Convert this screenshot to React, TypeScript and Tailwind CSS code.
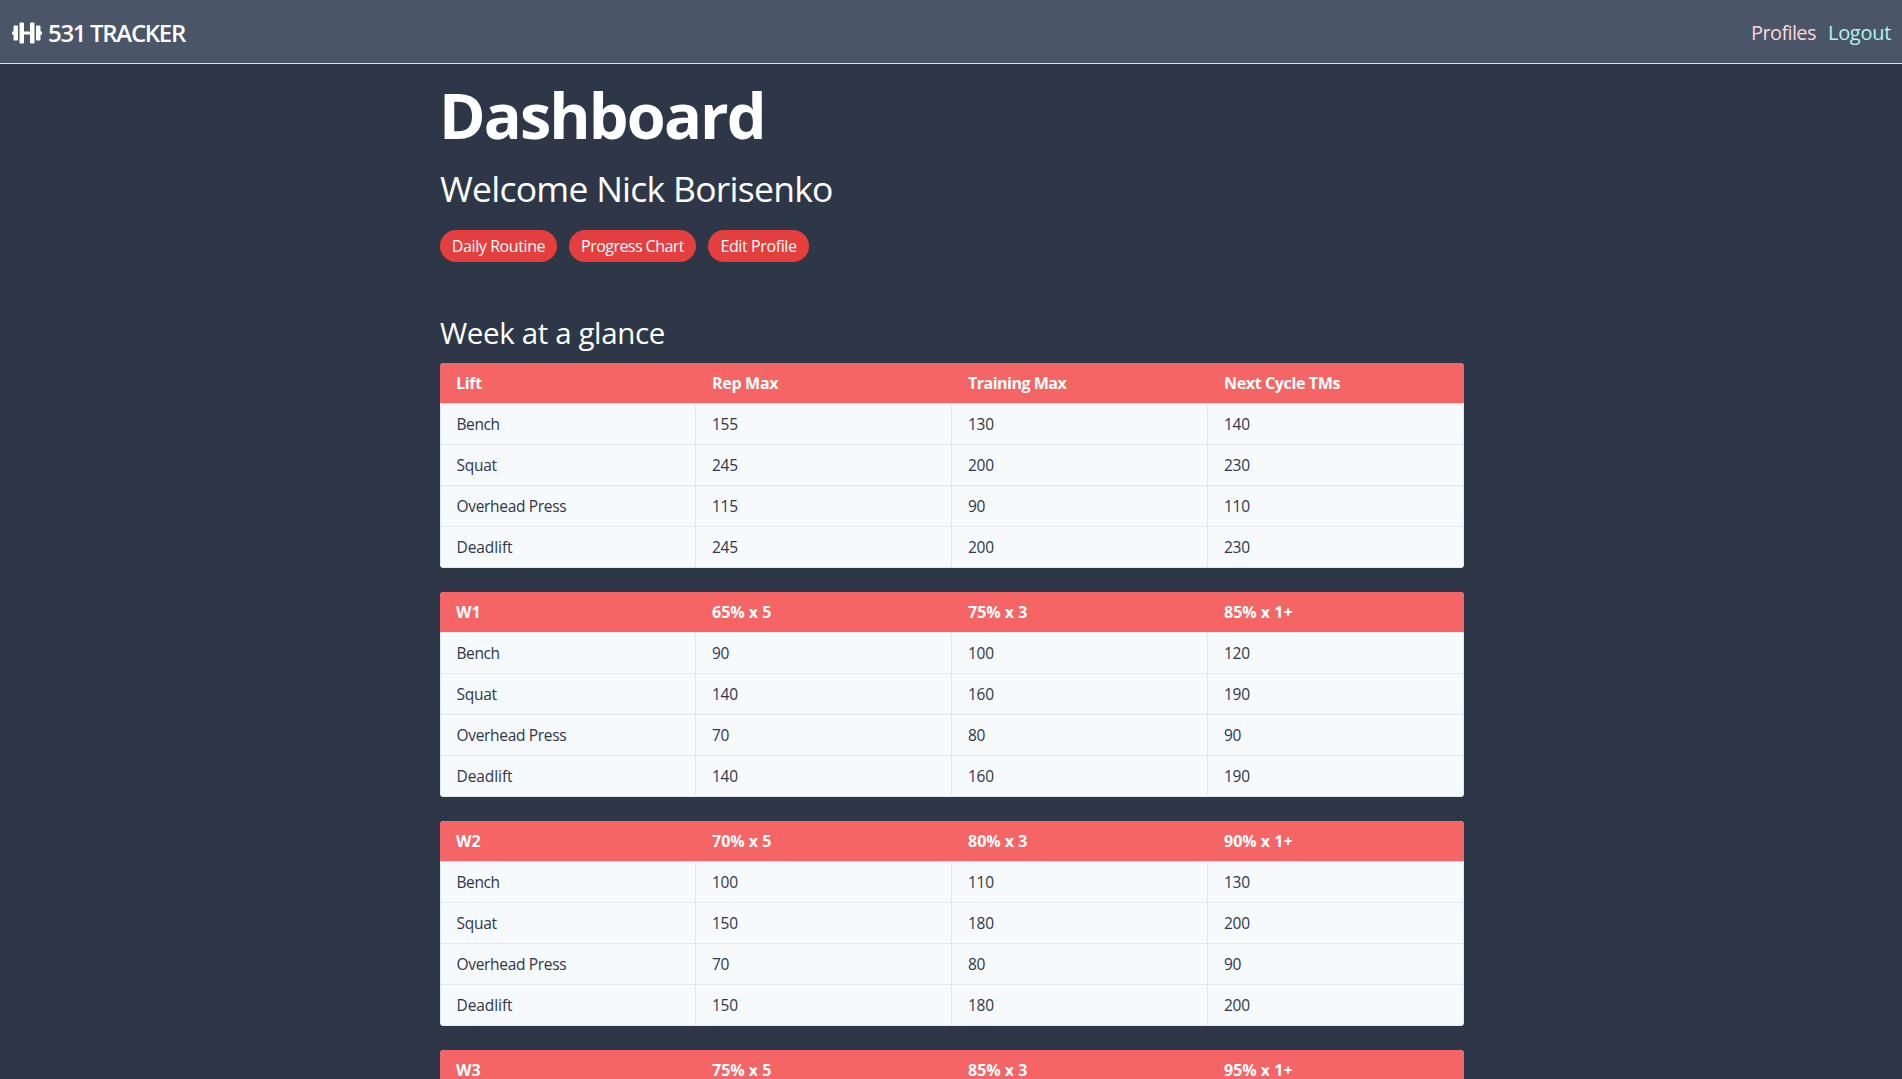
import { FaDumbbell } from 'react-icons/fa';

type TableData = { head: string[]; rows: string[][] };

const lifts = ['Bench', 'Squat', 'Overhead Press', 'Deadlift'];

const withLifts = (values: string[][]) => values.map((v, i) => [lifts[i], ...v]);

const tables: TableData[] = [
  {
    head: ['Lift', 'Rep Max', 'Training Max', 'Next Cycle TMs'],
    rows: withLifts([['155', '130', '140'], ['245', '200', '230'], ['115', '90', '110'], ['245', '200', '230']]),
  },
  {
    head: ['W1', '65% x 5', '75% x 3', '85% x 1+'],
    rows: withLifts([['90', '100', '120'], ['140', '160', '190'], ['70', '80', '90'], ['140', '160', '190']]),
  },
  {
    head: ['W2', '70% x 5', '80% x 3', '90% x 1+'],
    rows: withLifts([['100', '110', '130'], ['150', '180', '200'], ['70', '80', '90'], ['150', '180', '200']]),
  },
  {
    head: ['W3', '75% x 5', '85% x 3', '95% x 1+'],
    rows: [],
  },
];

const headSpacing: Record<string, string> = {
  Lift: 'tracking-[-0.3px]',
  'Rep Max': 'tracking-[-0.3px]',
  'Training Max': 'tracking-[-0.5px]',
  'Next Cycle TMs': 'tracking-[-0.36px]',
};

const cellSpacing: Record<string, string> = {
  Bench: 'tracking-[-0.4px]',
  Squat: 'tracking-[-0.25px]',
  'Overhead Press': 'tracking-[-0.32px]',
  Deadlift: 'tracking-[-0.08px]',
};

const buttons = [
  { label: 'Daily Routine', style: 'w-[117px] tracking-[-0.4px]' },
  { label: 'Progress Chart', style: 'w-[127px] tracking-[-0.54px]' },
  { label: 'Edit Profile', style: 'w-[101px] tracking-[-0.4px]' },
];

function LiftTable({ head, rows }: TableData) {
  return (
    <div className="mb-6 overflow-hidden rounded-[4px] bg-[#f7fafc]">
      <div className="grid h-10 grid-cols-4 items-center bg-[#f56565] font-bold text-white">
        {head.map((h) => (
          <div key={h} className={`pl-4 ${headSpacing[h] ?? 'tracking-[0px]'}`}>{h}</div>
        ))}
      </div>
      <div className="border-r border-b border-[#e2e8f0]">
        {rows.map((row) => (
          <div key={row[0]} className="grid h-[41px] grid-cols-[255px_256px_256px_256px] border-t border-[#e2e8f0] text-[15.5px] text-[#2d3748]">
            {row.map((cell, i) => (
              <div
                key={i}
                className={`flex items-center border-l border-[#e2e8f0] pt-[2px] ${i === 0 ? 'pl-[15.5px]' : 'pl-4'} ${cellSpacing[cell] ?? 'tracking-[-0.25px]'}`}
              >
                {cell}
              </div>
            ))}
          </div>
        ))}
      </div>
    </div>
  );
}

export default function App() {
  return (
    <div className="min-h-[1079px] bg-[#2d3748] font-['Open_Sans',sans-serif] text-base text-white">
      <nav className="flex h-16 items-center justify-between border-b border-[#b2f5ea] bg-[#4a5568] pt-[2px] pr-[10px] pl-3">
        <div className="flex items-center">
          <FaDumbbell className="h-6 w-[30px]" />
          <span className="ml-1.5 text-2xl font-semibold tracking-[-1.32px]">531 TRACKER</span>
        </div>
        <div className="flex text-xl">
          <a className="mr-3 w-[65px] tracking-[-0.62px] whitespace-nowrap text-[#fed7d7]">Profiles</a>
          <a className="w-[64px] tracking-[-0.3px] whitespace-nowrap text-[#b2f5ea]">Logout</a>
        </div>
      </nav>
      <main className="ml-[440px] h-[1015px] w-[1024px] overflow-hidden pt-[19px]">
        <h1 className="-ml-px text-[63px] leading-[64px] font-bold tracking-[-1.9px]">Dashboard</h1>
        <h2 className="mt-[14px] text-[35.5px] leading-[54px] tracking-[-0.74px]">Welcome Nick Borisenko</h2>
        <div className="mt-[15px] flex gap-3">
          {buttons.map(({ label, style }) => (
            <button key={label} className={`h-8 rounded-full bg-[#e53e3e] whitespace-nowrap ${style}`}>
              {label}
            </button>
          ))}
        </div>
        <h3 className="mt-12 mb-2 text-[29.5px] leading-[45px] tracking-[-0.37px]">Week at a glance</h3>
        {tables.map((t) => (
          <LiftTable key={t.head[0]} {...t} />
        ))}
      </main>
    </div>
  );
}
